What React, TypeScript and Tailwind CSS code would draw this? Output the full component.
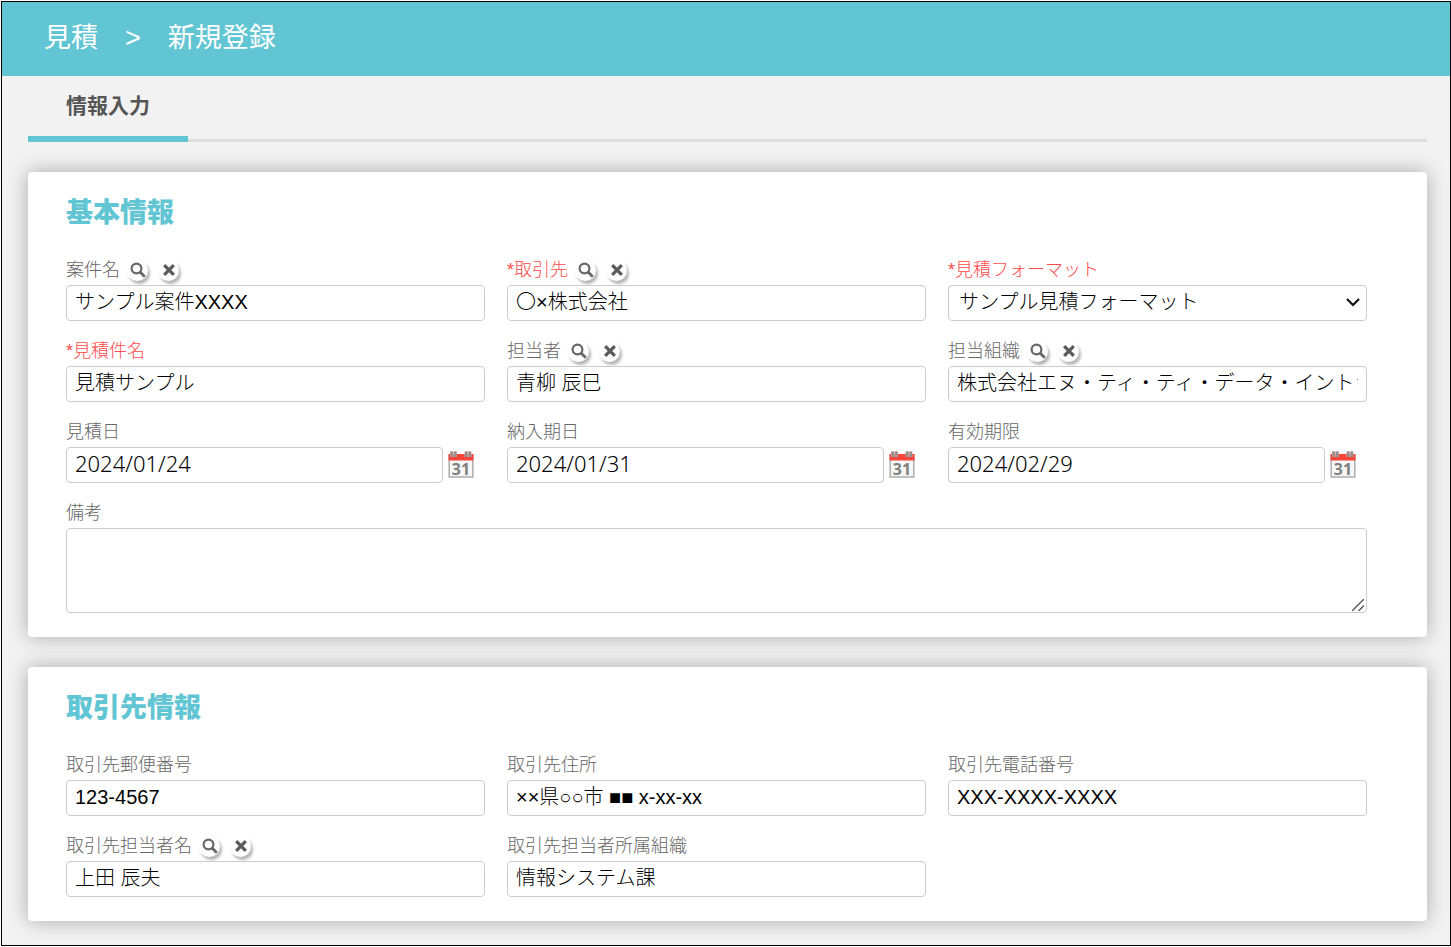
import { useId, type ReactNode } from "react";

const fieldBase =
  "h-9 w-full min-w-0 rounded border border-[#ccc] bg-white text-black outline-none focus:border-[#62c5d4]";

function SearchIcon() {
  return (
    <svg viewBox="0 0 16 16" className="size-4" fill="none" stroke="#666" aria-hidden="true">
      <circle cx="6.5" cy="6.5" r="4.9" strokeWidth="2.2" />
      <path d="M10 10 14.8 14.8" strokeWidth="2.8" />
    </svg>
  );
}

function ClearIcon() {
  return (
    <svg viewBox="0 0 12 12" className="size-3" fill="none" stroke="#5a5a5a" strokeWidth="3.3" aria-hidden="true">
      <path d="M1.2 1.2 10.8 10.8M10.8 1.2 1.2 10.8" />
    </svg>
  );
}

function CalendarIcon() {
  return (
    <svg viewBox="0 0 26 27" className="h-[27px] w-[26px]" aria-hidden="true">
      <rect x="1.2" y="4" width="23.6" height="22" fill="#f7f7f7" stroke="#adadad" strokeWidth="1.5" />
      <rect x="0.5" y="3" width="25" height="6.5" fill="#f8453a" />
      <path d="M3.7 0.5v5.5M7.3 0.5v5.5M18.2 0.5v5.5M21.8 0.5v5.5" stroke="#d9a5a2" strokeWidth="3.4" />
      <path d="M3.7 0.5v5.5M7.3 0.5v5.5M18.2 0.5v5.5M21.8 0.5v5.5" stroke="#8f8f8f" strokeWidth="2.3" />
      <text x="13" y="23.5" textAnchor="middle" fontSize="16" fontWeight="700" fill="#808080" fontFamily="Noto Sans, sans-serif">
        31
      </text>
    </svg>
  );
}

function RoundButton({ label, children }: { label: string; children: ReactNode }) {
  return (
    <button
      type="button"
      aria-label={label}
      className="flex size-[21px] items-center justify-center rounded-full bg-white shadow-[2px_3px_3px_#b4b4b4]"
    >
      {children}
    </button>
  );
}

interface FieldProps {
  label: string;
  required?: boolean;
  lookup?: boolean;
  wide?: boolean;
  children: (id: string) => ReactNode;
}

function Field({ label, required, lookup, wide, children }: FieldProps) {
  const id = useId();
  return (
    <div className={wide ? "col-span-3" : "min-w-0"}>
      <div className="flex h-7 items-center gap-[7px] pb-0.5">
        <label
          htmlFor={id}
          className={`text-lg leading-7 font-light whitespace-nowrap ${required ? "text-[#ff4b4b]" : "text-[#666]"}`}
        >
          {required && "*"}
          {label}
        </label>
        {lookup && (
          <div className="flex gap-[10px]">
            <RoundButton label={`${label}を検索`}>
              <SearchIcon />
            </RoundButton>
            <RoundButton label={`${label}をクリア`}>
              <ClearIcon />
            </RoundButton>
          </div>
        )}
      </div>
      {children(id)}
    </div>
  );
}

interface TextFieldProps {
  label: string;
  value: string;
  required?: boolean;
  lookup?: boolean;
  numeric?: boolean;
}

function TextField({ value, numeric, ...field }: TextFieldProps) {
  return (
    <Field {...field}>
      {(id) => (
        <input
          id={id}
          type="text"
          defaultValue={value}
          className={`${fieldBase} px-2 text-xl font-light ${numeric ? "pb-0.5" : "pb-[5px]"}`}
        />
      )}
    </Field>
  );
}

function DateField({ label, value }: { label: string; value: string }) {
  return (
    <Field label={label}>
      {(id) => (
        <div className="flex items-center gap-[5px] pr-[11px]">
          <input
            id={id}
            type="text"
            defaultValue={value}
            className={`${fieldBase} px-2 pb-1 font-['Noto_Sans','Noto_Sans_CJK_JP',sans-serif] text-[22px] font-light`}
          />
          <button type="button" aria-label={`${label}を選択`} className="shrink-0 pb-0.5">
            <CalendarIcon />
          </button>
        </div>
      )}
    </Field>
  );
}

function Card({ title, children }: { title: string; children: ReactNode }) {
  return (
    <section className="rounded bg-white pt-[21px] pr-[60px] pb-6 pl-[38px] shadow-[0_0_20px_rgba(0,0,0,0.3)]">
      <h2 className="mb-6 text-[27px] leading-10 font-black text-[#62c5d4]">{title}</h2>
      <div className="grid grid-cols-3 gap-x-[22px] gap-y-[17px]">{children}</div>
    </section>
  );
}

export default function App() {
  return (
    <div className="flex min-h-screen flex-col bg-white py-px pl-px font-['Liberation_Sans','Noto_Sans_CJK_JP',sans-serif]">
      <div className="flex-1 border border-black bg-[#f2f2f2]">
        <header className="bg-[#62c5d4] px-[42px] pt-[15px] pb-4 text-white">
          <h1 className="text-[27px] leading-[43px] font-normal whitespace-pre">見積　&gt;　新規登録</h1>
        </header>
        <main className="pt-px pr-[23px] pl-[26px]">
          <nav className="flex h-[65px] items-stretch border-b-[3px] border-[#ddd]">
            <a
              href="#input"
              aria-current="page"
              className="-mb-[3px] border-b-[6px] border-[#62c5d4] px-[38px] pt-3 text-[21px] leading-[34px] font-bold text-[#555]"
            >
              情報入力
            </a>
          </nav>
          <form className="flex flex-col gap-[30px] pt-[30px] pb-6">
            <Card title="基本情報">
              <TextField label="案件名" value="サンプル案件XXXX" lookup />
              <TextField label="取引先" value="〇×株式会社" required lookup />
              <Field label="見積フォーマット" required>
                {(id) => (
                  <div className="relative">
                    <select id={id} className={`${fieldBase} appearance-none pr-6 pb-0.5 pl-[10px] text-xl font-light`}>
                      <option>サンプル見積フォーマット</option>
                    </select>
                    <svg
                      viewBox="0 0 14 10"
                      className="pointer-events-none absolute top-3 right-[7px] h-[10px] w-[14px]"
                      fill="none"
                      stroke="#111"
                      strokeWidth="2.2"
                      aria-hidden="true"
                    >
                      <path d="M1 2 7 8l6-6" />
                    </svg>
                  </div>
                )}
              </Field>
              <TextField label="見積件名" value="見積サンプル" required />
              <TextField label="担当者" value="青柳 辰巳" lookup />
              <TextField label="担当組織" value="株式会社エヌ・ティ・ティ・データ・イントラマート" lookup />
              <DateField label="見積日" value="2024/01/24" />
              <DateField label="納入期日" value="2024/01/31" />
              <DateField label="有効期限" value="2024/02/29" />
              <Field label="備考" wide>
                {(id) => (
                  <div className="relative">
                    <textarea
                      id={id}
                      className="block h-[85px] w-full resize-none rounded border border-[#ccc] bg-white px-2 py-1 text-xl font-light outline-none focus:border-[#62c5d4]"
                    />
                    <svg
                      viewBox="0 0 12 12"
                      className="pointer-events-none absolute right-[3px] bottom-[2px] size-3"
                      stroke="#555"
                      strokeWidth="1.4"
                      aria-hidden="true"
                    >
                      <path d="M0 12 12 0M6.5 12 12 6.5" />
                    </svg>
                  </div>
                )}
              </Field>
            </Card>
            <Card title="取引先情報">
              <TextField label="取引先郵便番号" value="123-4567" numeric />
              <TextField label="取引先住所" value="××県○○市 ■■ x-xx-xx" />
              <TextField label="取引先電話番号" value="XXX-XXXX-XXXX" numeric />
              <TextField label="取引先担当者名" value="上田 辰夫" lookup />
              <TextField label="取引先担当者所属組織" value="情報システム課" />
            </Card>
          </form>
        </main>
      </div>
    </div>
  );
}
